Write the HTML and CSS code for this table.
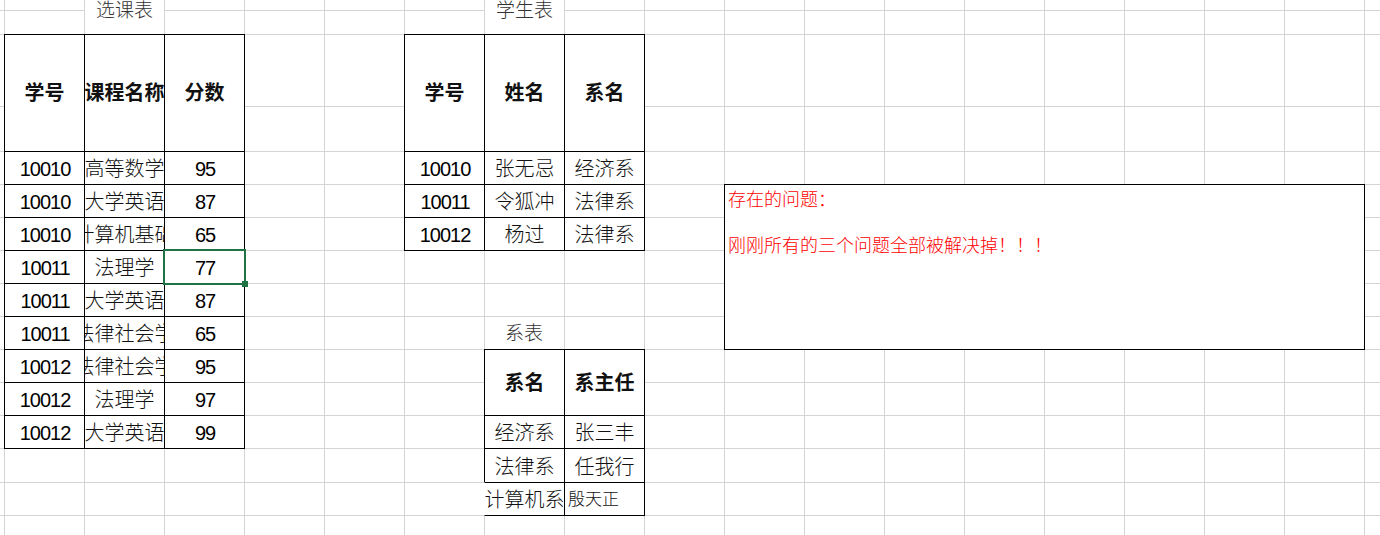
FILE: index.html
```html
<!DOCTYPE html>
<html lang="zh-CN">
<head>
<meta charset="utf-8">
<title>选课表</title>
<link rel="stylesheet" href="styles.css">
</head>
<body>
<div class="sheet">
  <div class="gridlines">
    <div class="hl"></div><div class="hl"></div><div class="hl"></div><div class="hl"></div>
    <div class="hl"></div><div class="hl"></div><div class="hl"></div><div class="hl"></div>
    <div class="hl"></div><div class="hl"></div><div class="hl"></div><div class="hl"></div>
    <div class="hl"></div><div class="hl"></div><div class="hl"></div><div class="hl"></div>
  </div>

  <div class="title title-course">选课表</div>
  <div class="tbl tbl-course">
    <div class="c h">学号</div><div class="c h">课程名称</div><div class="c h">分数</div>
    <div class="c n">10010</div><div class="c">高等数学</div><div class="c n">95</div>
    <div class="c n">10010</div><div class="c">大学英语</div><div class="c n">87</div>
    <div class="c n">10010</div><div class="c">计算机基础</div><div class="c n">65</div>
    <div class="c n">10011</div><div class="c">法理学</div><div class="c n sel">77<span class="sel-box"><span class="sel-handle"></span></span></div>
    <div class="c n">10011</div><div class="c">大学英语</div><div class="c n">87</div>
    <div class="c n">10011</div><div class="c">法律社会学</div><div class="c n">65</div>
    <div class="c n">10012</div><div class="c">法律社会学</div><div class="c n">95</div>
    <div class="c n">10012</div><div class="c">法理学</div><div class="c n">97</div>
    <div class="c n">10012</div><div class="c">大学英语</div><div class="c n">99</div>
  </div>

  <div class="title title-student">学生表</div>
  <div class="tbl tbl-student">
    <div class="c h">学号</div><div class="c h">姓名</div><div class="c h">系名</div>
    <div class="c n">10010</div><div class="c">张无忌</div><div class="c">经济系</div>
    <div class="c n">10011</div><div class="c">令狐冲</div><div class="c">法律系</div>
    <div class="c n">10012</div><div class="c">杨过</div><div class="c">法律系</div>
  </div>

  <div class="title-dept">系表</div>
  <div class="tbl tbl-dept">
    <div class="c h">系名</div><div class="c h">系主任</div>
    <div class="c">经济系</div><div class="c">张三丰</div>
    <div class="c">法律系</div><div class="c">任我行</div>
    <div class="c open">计算机系</div><div class="c left">殷天正</div>
  </div>

  <div class="note">
    <p class="note-line gap">存在的问题：</p>
    <p class="note-line">刚刚所有的三个问题全部被解决掉！！！</p>
  </div>
</div>
</body>
</html>
```
FILE: styles.css
```css
* { box-sizing: border-box; }

html, body {
  margin: 0;
  padding: 0;
  background: #fff;
}

body {
  width: 1380px;
  height: 535px;
  overflow: hidden;
  font-family: "Liberation Sans", "Noto Sans CJK SC", sans-serif;
  color: #000;
}

.sheet {
  --rows: 10px 24px 72px 45px repeat(9, 33px) 34px 33px 33px;
  display: grid;
  grid-template-columns: 4px repeat(18, 80px);
  grid-template-rows: var(--rows);
  width: 1380px;
  height: 535px;
  overflow: hidden;
}

.gridlines {
  grid-area: 1 / 1 / -1 / -1;
  display: grid;
  grid-template-rows: var(--rows);
  background-image: linear-gradient(to right, #d4d4d4 0 1px, transparent 1px);
  background-size: 80px 100%;
  background-position: 4px 0;
  background-repeat: repeat-x;
}

.hl { border-top: 1px solid #d4d4d4; }
.hl:first-child { border-top-color: transparent; }

.title {
  grid-row: 1 / 3;
  margin-left: 1px;
  background: #fff;
  display: flex;
  justify-content: center;
  align-items: flex-start;
  padding-top: 1px;
  font-size: 19px;
  line-height: 20px;
  font-weight: 300;
  color: #333;
}
.title-course { grid-column: 3; }
.title-student { grid-column: 8; }

.title-dept {
  grid-column: 8;
  grid-row: 10;
  display: flex;
  justify-content: center;
  align-items: center;
  padding-top: 2px;
  font-size: 19px;
  line-height: 20px;
  font-weight: 300;
  color: #333;
}

.tbl { display: grid; }

.tbl-course {
  grid-column: 2 / 5;
  grid-row: 3 / 14;
  grid-template-columns: repeat(3, 80px);
  grid-template-rows: 117px repeat(9, 33px);
}

.tbl-student {
  grid-column: 7 / 10;
  grid-row: 3 / 8;
  grid-template-columns: repeat(3, 80px);
  grid-template-rows: 117px repeat(3, 33px);
}

.tbl-dept {
  grid-column: 8 / 10;
  grid-row: 11 / 16;
  grid-template-columns: repeat(2, 80px);
  grid-template-rows: 66px 33px 34px 33px;
}

.c {
  border: 1px solid #000;
  margin: 0 -1px -1px 0;
  background: #fff;
  display: flex;
  align-items: center;
  justify-content: center;
  white-space: nowrap;
  overflow: hidden;
  font-size: 20px;
  line-height: 20px;
  font-weight: 300;
  padding-top: 2px;
  color: #111;
}

.c.h { font-weight: 700; padding-top: 0; }
.c.n { letter-spacing: -1px; padding-left: 1px; color: #000; }

.c.open { border-left-color: transparent; }
.c.left {
  justify-content: flex-start;
  padding-left: 3px;
  font-size: 17px;
}

.c.sel {
  position: relative;
  overflow: visible;
  z-index: 1;
}

.sel-box {
  position: absolute;
  left: -2px;
  top: -2px;
  right: -2px;
  bottom: -2px;
  border: 2px solid #217346;
}

.sel-handle {
  position: absolute;
  right: -4px;
  bottom: -4px;
  width: 6px;
  height: 6px;
  background: #217346;
}

.note {
  grid-column: 11 / 19;
  grid-row: 6 / 11;
  border: 1px solid #000;
  margin: 0 -1px -1px 0;
  background: #fff;
  color: #ff0000;
  font-size: 18px;
  line-height: 23px;
  font-weight: 300;
  padding: 4px 3px;
}

.note-line { margin: 0; }
.note-line.gap { margin-bottom: 23px; }
```
